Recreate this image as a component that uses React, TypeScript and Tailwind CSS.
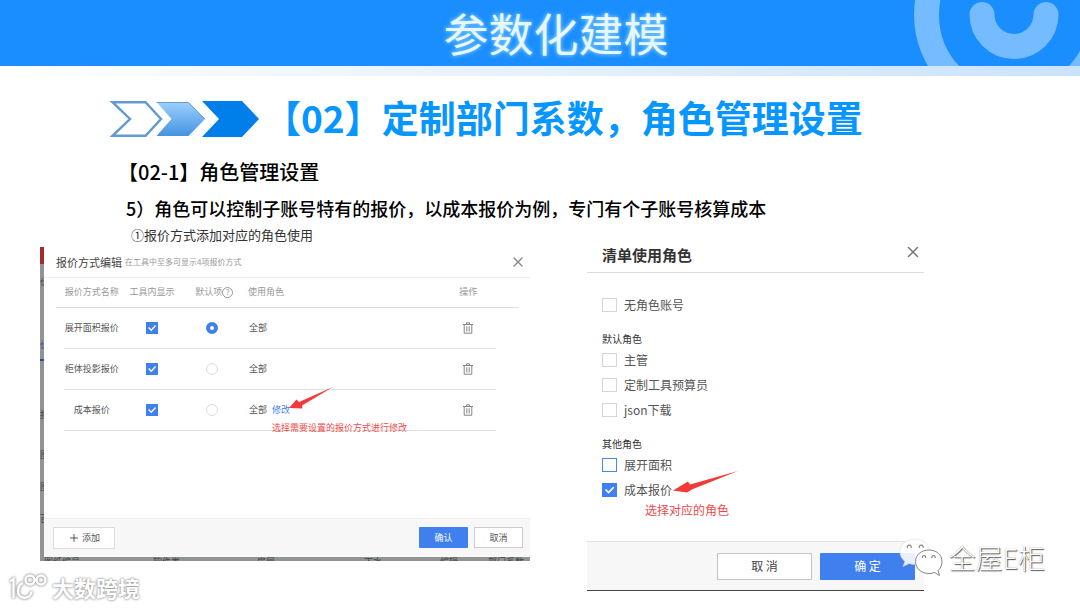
import { useState } from "react";
import { Plus, X } from "lucide-react";
import clsx from "clsx";

const quoteModes = [
  { id: "area", name: "展开面积报价", roles: "全部" },
  { id: "projection", name: "柜体投影报价", roles: "全部" },
  { id: "cost", name: "成本报价", roles: "全部", editable: true },
];

const defaultRoles = [
  { id: "manager", name: "主管" },
  { id: "estimator", name: "定制工具预算员" },
  { id: "json", name: "json下载" },
];

const otherRoles = [
  { id: "role-area", name: "展开面积", focused: true },
  { id: "role-cost", name: "成本报价", checked: true },
];

// what is left visible of the page behind the first dialog
const edgeLabels = [
  { text: "价", className: "mt-3" },
  { text: "价", className: "mt-[51px] border-b-2 border-[#2b4f9e] pb-2 text-[#2b4f9e]" },
  { text: "报", className: "mt-12" },
  { text: "图", className: "mt-7" },
  { text: "图", className: "mt-5" },
  { text: "百", className: "mt-5" },
];
const bottomLabels = ["图纸编号", "软件类", "房屋", "下水", "编辑", "部门系数"];

function HeaderMark() {
  return (
    <svg
      className="absolute top-0 right-0 h-full w-[170px]"
      viewBox="910 0 170 66"
      fill="none"
      stroke="#75bbff"
      strokeWidth="25"
      aria-hidden="true"
    >
      <circle cx="1014" cy="15" r="87.5" />
      <path d="M982 14.5a32 32 0 0 0 64 0" strokeLinecap="round" />
    </svg>
  );
}

function Chevrons() {
  return (
    <svg className="h-9 w-[150px] shrink-0" viewBox="0 0 150 36" aria-hidden="true">
      <defs>
        <linearGradient id="chevron" x1="0" y1="0" x2="0" y2="1">
          <stop offset="0" stopColor="#9bd0ff" />
          <stop offset="1" stopColor="#4593e0" />
        </linearGradient>
      </defs>
      <path
        d="M2.5 1.2H35.5L51 18 35.5 34.8H2.5L20 18Z"
        fill="#fff"
        stroke="#6399d2"
        strokeWidth="2.4"
      />
      <path d="M46.5 1H78.5L95 18 78.5 35H46.5L61.5 18Z" fill="url(#chevron)" />
      <path d="M46.5 1.5H78.5L95 18" fill="none" stroke="#6d9fd0" />
      <path d="M92 0H132L149 18 132 36H92L109 18Z" fill="#007fea" />
    </svg>
  );
}

function TrashIcon() {
  return (
    <svg className="mx-auto size-3" viewBox="0 0 12 12" fill="none" stroke="#858585" aria-hidden="true">
      <path d="M1 2.5h10M4.5 2V.8h3V2M2.2 2.5v8.7h7.6V2.5M4.8 4.2v5.3M7.2 4.2v5.3" />
    </svg>
  );
}

function Tick({ className }: { className: string }) {
  return (
    <svg
      className={clsx("pointer-events-none absolute inset-0 hidden peer-checked:block", className)}
      viewBox="0 0 12 12"
      fill="none"
      stroke="#fff"
      strokeWidth="1.4"
      aria-hidden="true"
    >
      <path d="M2.6 5.6 5.2 8.2 9.6 3.6" />
    </svg>
  );
}

type RoleOptionProps = { id: string; name: string; checked?: boolean; focused?: boolean };

function RoleOption({ id, name, checked, focused }: RoleOptionProps) {
  return (
    <div className="flex h-[25px] items-center gap-[7px]">
      <span className="relative h-[14px] w-[15px]">
        <input
          id={id}
          type="checkbox"
          defaultChecked={checked}
          className={clsx(
            "peer block h-[14px] w-[15px] appearance-none border bg-white checked:border-[#4080ee] checked:bg-[#4080ee]",
            focused ? "border-[#4a86e8]" : "border-[#d6d6d6]",
          )}
        />
        <Tick className="h-[14px] w-[15px]" />
      </span>
      <label htmlFor={id} className="text-[12px] leading-4 text-[#555]">
        {name}
      </label>
    </div>
  );
}

function QuoteDialog() {
  const [defaultMode, setDefaultMode] = useState("area");

  return (
    <section className="bg-[#929494]">
      <div className="flex">
        <div className="flex w-1 shrink-0 flex-col overflow-hidden text-[9px] leading-3 text-[#444]">
          <div className="h-[17px] shrink-0 bg-[#a52a2a]" />
          {edgeLabels.map((label, i) => (
            <span key={i} aria-hidden="true" className={clsx("w-3 shrink-0", label.className)}>
              {label.text}
            </span>
          ))}
        </div>

        <div className="flex min-w-0 flex-1 flex-col bg-white">
          <div className="flex h-[31px] items-center border-b border-[#ececec] pr-1 pl-3">
            <h4 className="text-[11px] text-[#444]">报价方式编辑</h4>
            <span className="ml-[3px] text-[8px] text-[#999]">在工具中至多可显示4项报价方式</span>
            <button type="button" aria-label="关闭" className="ml-auto">
              <X className="size-4 text-[#888]" strokeWidth={2} />
            </button>
          </div>

          <div className="pr-[11px] pl-3">
            <table className="w-full table-fixed border-collapse text-[9px] leading-3">
              <colgroup>
                <col className="w-2" />
                <col className="w-[12%]" />
                <col className="w-[14%]" />
                <col className="w-[12%]" />
                <col />
                <col className="w-[12%]" />
                <col className="w-[23px]" />
              </colgroup>
              <thead>
                <tr className="h-[29px] border-b border-[#dedede] text-[#999] [&>th]:p-0 [&>th]:font-normal [&>th]:whitespace-nowrap">
                  <td />
                  <th>报价方式名称</th>
                  <th>工具内显示</th>
                  <th>
                    <span className="inline-flex items-center pl-1">
                      默认项
                      <span className="flex size-[11px] items-center justify-center rounded-full border border-[#999] text-[8px] leading-none">
                        ?
                      </span>
                    </span>
                  </th>
                  <th className="text-left">
                    <span className="pl-2">使用角色</span>
                  </th>
                  <th>操作</th>
                  <td />
                </tr>
              </thead>
              <tbody>
                {quoteModes.map((mode) => (
                  <tr key={mode.id} className="h-[41px] text-center text-[#555]">
                    <td />
                    <td className="border-b border-[#e0e0e0] p-0 whitespace-nowrap">{mode.name}</td>
                    <td className="border-b border-[#e0e0e0] p-0">
                      <span className="relative mx-auto block size-3">
                        <input
                          type="checkbox"
                          defaultChecked
                          aria-label={`${mode.name} 工具内显示`}
                          className="peer block size-3 appearance-none border border-[#d6d6d6] checked:border-[#4080ee] checked:bg-[#4080ee]"
                        />
                        <Tick className="size-3" />
                      </span>
                    </td>
                    <td className="border-b border-[#e0e0e0] p-0">
                      <input
                        type="radio"
                        name="default-mode"
                        aria-label={`${mode.name} 默认项`}
                        checked={defaultMode === mode.id}
                        onChange={() => setDefaultMode(mode.id)}
                        className="mx-auto block size-3 appearance-none rounded-full border border-[#dcdcdc] bg-white checked:border-4 checked:border-[#4080ee]"
                      />
                    </td>
                    <td className="relative border-b border-[#e0e0e0] p-0 pl-[9px] text-left">
                      {mode.roles}
                      {mode.editable && (
                        <>
                          <a href="#role-dialog" className="ml-[5px] text-[#3f7fee]">
                            修改
                          </a>
                          <svg
                            className="absolute -top-1 left-12 h-[23px] w-[46px]"
                            viewBox="0 0 46 23"
                            fill="#f23a3a"
                            aria-hidden="true"
                          >
                            <path d="M1 22 8.500 13.500 11 16 45 1 14 19.500 14.500 22.500Z" />
                          </svg>
                          <span className="absolute top-8 left-8 text-[9px] leading-3 whitespace-nowrap text-[#f04a4a]">
                            选择需要设置的报价方式进行修改
                          </span>
                        </>
                      )}
                    </td>
                    <td className="border-b border-[#e0e0e0] p-0">
                      <button type="button" aria-label={`删除${mode.name}`} className="block w-full">
                        <TrashIcon />
                      </button>
                    </td>
                    <td />
                  </tr>
                ))}
              </tbody>
            </table>
          </div>

          <div className="mt-[87px] flex h-[39px] items-center gap-[6px] border-t border-[#eee] bg-[#f7f7f7] pr-[7px] pl-[9px] text-[9px]">
            <button
              type="button"
              className="mr-auto flex h-[22px] w-[62px] items-center justify-center gap-[2px] border border-[#ddd] bg-white text-[#555]"
            >
              <Plus className="size-3" />
              添加
            </button>
            <button type="button" className="h-[21px] w-[49px] rounded-[1px] bg-[#4080ee] text-white">
              确认
            </button>
            <button type="button" className="h-[21px] w-[49px] border border-[#ccc] bg-white text-[#555]">
              取消
            </button>
          </div>
        </div>
      </div>
      <div
        className="grid h-1 grid-cols-[109fr_104fr_107fr_76fr_48fr_42fr] items-end overflow-hidden pl-1 text-[9px] leading-[9px] text-[#444]"
        aria-hidden="true"
      >
        {bottomLabels.map((label) => (
          <span key={label} className="whitespace-nowrap">
            {label}
          </span>
        ))}
      </div>
    </section>
  );
}

function RoleDialog() {
  return (
    <section id="role-dialog" className="border-b border-[#444]">
      <div className="flex h-[26px] items-start justify-between border-b border-[#ddd] pr-[2px] pl-[15px]">
        <h4 className="text-[15px] leading-[15px] font-bold text-[#333]">清单使用角色</h4>
        <button type="button" aria-label="关闭" className="-mt-1">
          <X className="size-[18px] text-[#777]" strokeWidth={2} />
        </button>
      </div>

      <div className="relative pt-[19px] pb-[39px] pl-[15px]">
        <RoleOption id="no-role" name="无角色账号" />
        <fieldset className="mt-[14px]">
          <legend className="text-[10px] leading-4 text-[#333]">默认角色</legend>
          {defaultRoles.map((role) => (
            <RoleOption key={role.id} {...role} />
          ))}
        </fieldset>
        <fieldset className="mt-[14px]">
          <legend className="text-[10px] leading-4 text-[#333]">其他角色</legend>
          {otherRoles.map((role) => (
            <RoleOption key={role.id} {...role} />
          ))}
        </fieldset>
        <svg
          className="absolute bottom-[46px] left-[86px] h-6 w-[66px]"
          viewBox="0 0 66 24"
          fill="#f23a3a"
          aria-hidden="true"
        >
          <path d="M0 19.500 15 10.500 17 13.500 65 0 20 18 14 21.500Z" />
        </svg>
        <p className="absolute bottom-[23px] left-[58px] text-[12px] leading-4 text-[#f04a4a]">选择对应的角色</p>
      </div>

      <div className="flex h-[49px] items-center justify-end gap-2 border-t border-[#e2e2e2] bg-[#f7f7f7] pr-[9px] text-[12px]">
        <button type="button" className="h-[27px] w-[95px] border border-[#c4c4c4] bg-white text-[#444]">
          取 消
        </button>
        <button type="button" className="h-[27px] w-[95px] rounded-[1px] bg-[#4080ee] text-white">
          确 定
        </button>
      </div>
    </section>
  );
}

function AccountMark() {
  return (
    <div className="absolute right-[35px] bottom-[30px] flex items-center gap-[6px]">
      <svg className="h-10 w-[44px]" viewBox="0 0 44 40" aria-hidden="true">
        <path
          d="M16 1C7 1 1 7 1 14c0 4 2 7 5 9.500l-2 5 6-3c2 .7 4 1 6 1 9 0 15-5.500 15-12.500S25 1 16 1Z"
          fill="#fff"
          fillOpacity=".88"
          stroke="#ddd"
          strokeWidth=".6"
        />
        <path
          d="M30 12c-8 0-13.500 5-13.500 11.500S22 35.500 30 35.500c2 0 4-.3 5.500-1l5 3-1.500-5c2.500-2 4-5 4-9C43 17 37.500 12 30 12Z"
          fill="#fff"
          stroke="#777"
          strokeWidth=".9"
        />
        <g fill="none" stroke="#888" strokeWidth="1.200">
          <path d="M8.500 10a2 2 0 1 1 3.500 0M20.500 10a2 2 0 1 1 3.500 0M23.500 20a1.700 1.700 0 1 1 3 0M33 20a1.700 1.700 0 1 1 3 0" />
        </g>
      </svg>
      <span className="text-[27px] leading-8 font-light text-white [text-shadow:1px_1px_1px_#555,0_0_1px_#999]">
        全屋E柜
      </span>
    </div>
  );
}

function SiteMark() {
  return (
    <div className="absolute bottom-[6px] left-2 flex items-center gap-1">
      <svg
        className="h-[30px] w-10 [filter:drop-shadow(0_0_1px_#999)_drop-shadow(0_0_1px_#bbb)]"
        viewBox="0 0 40 30"
        fill="none"
        stroke="#fff"
        strokeWidth="2.400"
        aria-hidden="true"
      >
        <path d="M2 9.500 5.500 7v19" />
        <path d="M15 11c-6 2-7 13 0 14.500 5 1 8-2 8.500-6" />
        <circle cx="22" cy="8" r="4.500" />
        <circle cx="33" cy="8" r="4.500" />
      </svg>
      <span className="text-[22px] leading-7 font-bold text-white [text-shadow:0_0_2px_#888,0_0_3px_#aaa]">
        大数跨境
      </span>
    </div>
  );
}

export default function App() {
  return (
    <div className="relative min-h-screen overflow-hidden bg-white pb-[17px] font-['Noto_Sans_CJK_SC',sans-serif]">
      <header className="relative flex h-[66px] items-center justify-center bg-[#1a8eff] pl-8">
        <h1 className="text-[45px] leading-[66px] text-[#e6f7ff] [text-shadow:0_0_4px_#a8e4ff]">参数化建模</h1>
        <HeaderMark />
      </header>
      <div className="h-[10px] bg-linear-to-r from-white to-[#cae3fc]" />

      <div className="mt-6 flex h-[38px] items-center gap-1 pl-[110px]">
        <Chevrons />
        <h2 className="pb-1 text-[37px] leading-[38px] font-bold whitespace-nowrap text-[#0596ff]">
          【02】定制部门系数，角色管理设置
        </h2>
      </div>
      <h3 className="mt-[22px] pl-[118px] text-[20px] leading-6 font-medium text-black">【02-1】角色管理设置</h3>
      <p className="mt-3 pl-[126px] text-[18px] leading-6 font-medium text-black">
        5）角色可以控制子账号特有的报价，以成本报价为例，专门有个子账号核算成本
      </p>
      <p className="mt-[5px] pl-[131px] text-[13px] leading-5 text-[#333]">①报价方式添加对应的角色使用</p>

      <main className="mt-[2px] grid grid-cols-[490fr_337fr] items-start gap-[57px] pr-[156px] pl-10">
        <QuoteDialog />
        <RoleDialog />
      </main>

      <AccountMark />
      <SiteMark />
    </div>
  );
}
